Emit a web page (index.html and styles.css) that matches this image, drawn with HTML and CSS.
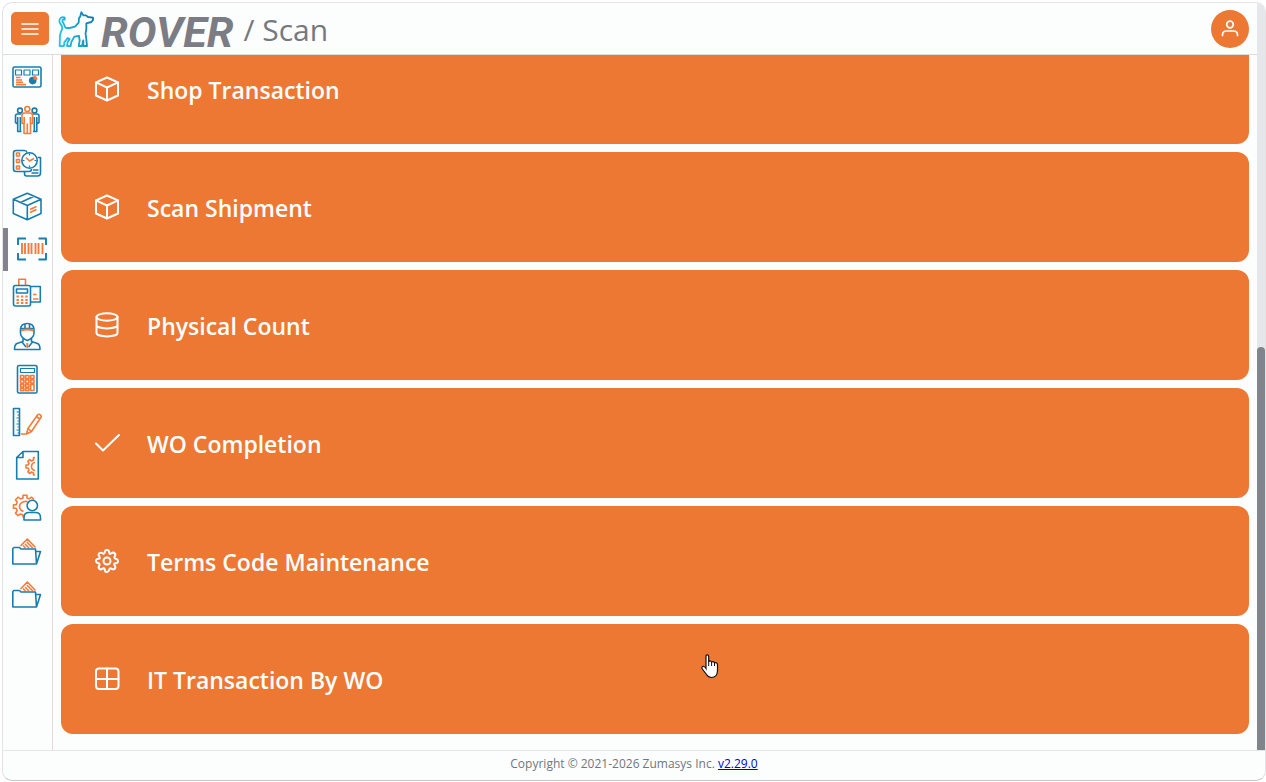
FILE: index.html
```html
<!DOCTYPE html>
<html lang="en">
<head>
<meta charset="utf-8">
<title>Rover / Scan</title>
<link rel="stylesheet" href="styles.css">
</head>
<body>
<div class="app">
  <div class="viewport">
    <div class="page">
      <header class="header">
        <button class="menu-button" type="button" aria-label="Menu">
          <svg width="18" height="14" viewBox="0 0 18 14"><path d="M1 2h16M1 7h16M1 12h16" stroke="#fff" stroke-width="1.6" stroke-linecap="round"/></svg>
        </button>
        <svg class="dog" viewBox="25 17 108 114" aria-hidden="true">
          <defs><linearGradient id="dog-stroke" x1="0" x2="1" y1="0.6" y2="0.3"><stop offset="0" stop-color="#27c4e6"/><stop offset="0.5" stop-color="#1a9fcb"/><stop offset="1" stop-color="#1678a8"/></linearGradient></defs>
          <path d="M45 40C37 36 29 41 29 50C29 60 37 62 38 69C38 78 31 84 31 94L30 125H43L44 114L54 101L60 104L54 113L52 125H63L65 113L74 97L88 95L90 109L87 125H97L101 108L101 125H112L109 96C104 88 111 80 110 71V57L125 53L130 47V40L115 38L109 33H101L95 24L92 36L88 41L87 55L76 67L60 71H49C43 68 46 61 40 55C36 49 39 44 45 46Z" fill="none" stroke="url(#dog-stroke)" stroke-width="5.5" stroke-linejoin="round"/>
        </svg>
        <span class="brand">ROVER</span>
        <h1 class="title">/ Scan</h1>
        <button class="avatar" type="button" aria-label="Account">
          <svg width="18" height="18" viewBox="0 0 18 18" fill="none" stroke="#fff" stroke-width="1.7" stroke-linecap="round"><circle cx="9" cy="4.500" r="3.300"/><path d="M1.500 15.500v-.7c0-2.500 2-3.800 4-3.800h7c2 0 4 1.300 4 3.800v.7"/></svg>
        </button>
      </header>
      <div class="body">
        <nav class="sidebar" aria-label="Modules">
          <a class="nav-item" href="#" aria-label="Dashboard"><svg class="nav-icon" viewBox="0 0 30 30"><rect class="b" x="1" y="5" width="28" height="20" rx="1.500"/><path class="b t" d="M3.500 8h6v5h-6zM12 8h6v5h-6zM20.500 8h6v5h-6z"/><path class="o" d="M4 15.500h4.500M4 18h6M4 20.300h7M4 22.600h10"/><circle class="bf" cx="20.700" cy="18.600" r="3.800"/><path class="of" d="M21.500 17.800V13.800a4 4 0 0 1 4 4z"/></svg></a>
          <a class="nav-item" href="#" aria-label="Human Resources"><svg class="nav-icon" viewBox="0 0 30 30"><circle class="b" cx="8" cy="5.500" r="2.400"/><circle class="b" cx="22.500" cy="5.500" r="2.400"/><path class="b" d="M9.500 9H5.500Q3.500 9 3.500 11V17.500L5.700 19V26.500H9.500M8.300 12V26M21 9h4Q27 9 27 11V17.500L24.800 19V26.500H21M22.300 12V26M5.700 12v7M24.800 12v7"/><circle class="o" cx="15.300" cy="4" r="2.500"/><path class="o" d="M12.300 8h6Q20.500 8 20.500 10.500V18.500H18.500V28.500H12V18.500H10V10.500Q10 8 12.300 8ZM12.200 12v7M18.400 12v7M15.300 18.500v10"/></svg></a>
          <a class="nav-item" href="#" aria-label="Time Tracking"><svg class="nav-icon" viewBox="0 0 30 30"><path class="b" d="M15 4.500Q14.500 2.500 12.500 2.500H4Q1.500 2.500 1.500 5V21Q1.500 23.500 4 23.500H17Q19.500 23.500 19.500 21M25.500 9.500H28.500V25Q28.500 28 25.500 28H14.500Q12.500 28 12.500 25.500V24M21 22h5.500M19.500 25h7"/><circle class="b" cx="17.500" cy="12.500" r="7.700"/><path class="b t" d="M17.500 5.500v2M17.500 17.500v2M10.500 12.500h2M22.500 12.500h2"/><path class="o" d="M4.500 5h3v3h-3zM4.500 11.500h3v3h-3zM4.500 18h3v3h-3zM14 9.500l3.500 3.500L22 10.500"/></svg></a>
          <a class="nav-item" href="#" aria-label="Inventory"><svg class="nav-icon" viewBox="0 0 30 30"><path class="b" d="M15.300 2.300L29 8.200V22.500L15.300 28.700L1.300 22.500V8.200ZM1.300 8.200L15.300 14.500L29 8.200M15.300 14.500V28.700M8.500 11.500L22 5.300"/><path class="o" d="M18 18.500L24.500 15.500M18 21.500L24.500 18.500"/></svg></a>
          <a class="nav-item active" href="#" aria-label="Scan" aria-current="page"><svg class="nav-icon" viewBox="0 0 30 30"><path class="b w" d="M1 11V4.500H9M21.500 4.500H29V11M29 19V25.500H21.500M9 25.500H1V19"/><path class="o w" d="M5 9v11M8 9v11M11.500 9v11M14.500 9v11M18.500 9v11M21.500 9v11M25.500 9v11"/></svg></a>
          <a class="nav-item" href="#" aria-label="Point of Sale"><svg class="nav-icon" viewBox="0 0 30 30"><path class="b" d="M18.500 9.500h9.800V25H18.500"/><path class="o" d="M6.800 8.500V2.200h6.700v6.300M21 17.500h3.500M21 22h5.500"/><path class="b" d="M3.500 8.500h13.300Q18.500 8.500 18.500 10.500V27Q18.500 29 16.800 29H3.500Q1.500 29 1.500 27V10.500Q1.500 8.500 3.500 8.500ZM4.500 12h11v4h-11z"/><path class="o w" stroke-dasharray="2.400 2" d="M4.500 19.500h11.500M4.500 23h11.500M4.500 26h11.500"/></svg></a>
          <a class="nav-item" href="#" aria-label="Work Orders"><svg class="nav-icon" viewBox="0 0 30 30"><path class="b" d="M8.500 9V8Q9 2.500 15.300 2.500Q21.500 2.500 22 8V12.500Q21.500 17 15.300 19.500Q9 17 8.500 12.500ZM8.500 7.500h13.500M13 2.500v4.500M17.500 2.500v4.500M11 17v3.500L5 22.500Q2.500 23.500 2.500 28.500H28Q28 23.500 25.500 22.500L19.500 20.500V17M10 21l4 5M20.500 21l-4 5"/><path class="o w" d="M9 9.500Q15 7.500 21.500 9.500M15.300 22v5"/></svg></a>
          <a class="nav-item" href="#" aria-label="Accounting"><svg class="nav-icon" viewBox="0 0 30 30"><rect class="b" x="5.500" y="1.500" width="19.500" height="27.500" rx="1.500"/><path class="b t" d="M8.500 4.500h14v4h-14z"/><path class="o" d="M8.500 11.500h3.300v3h-3.300zM13.600 11.500h3.300v3h-3.300zM18.700 11.500h3.300v3h-3.300zM8.500 16h3.300v3h-3.300zM13.600 16h3.300v3h-3.300zM18.700 16h3.300v3h-3.300zM8.500 20.500h3.300v2.500h-3.300zM13.600 20.500h3.300v2.500h-3.300zM18.700 20.500h3.300v6h-3.300zM8.500 24.500h3.300v2.300h-3.300zM13.600 24.500h3.300v2.300h-3.300z"/></svg></a>
          <a class="nav-item" href="#" aria-label="Engineering"><svg class="nav-icon" viewBox="0 0 30 30"><path class="b" d="M1.500 1.500h6v27h-6z"/><path class="b t" d="M4.500 5h3M5.500 8h2M4.500 11h3M5.500 14h2M4.500 17h3M5.500 20h2M4.500 23h3M5.500 26h2"/><path class="o" d="M9 27h5.500L16 21.500L25.500 8Q27 6.500 28.500 8T28.500 11L19.500 24.500L14.500 27M16 21.500L19.500 24.500M24.500 9.500L27.700 12"/></svg></a>
          <a class="nav-item" href="#" aria-label="Configuration"><svg class="nav-icon" viewBox="0 0 30 30"><path class="b" d="M11 1.500H26.300V29H4.700V7.500ZM11 1.500V7.500H4.700"/><path class="o" d="M23 7.500H21.500V10L19.500 11L17.500 9.500L15.800 11.500L17 13.300L16.200 15H14V18H16.200L17 20L15.800 21.700L17.500 23.500L19.500 22L21.500 23V25H23M23 12.500Q19.500 13 19.500 16.500T23 20.500"/></svg></a>
          <a class="nav-item" href="#" aria-label="User Settings"><svg class="nav-icon" viewBox="0 0 30 30"><path class="o" d="M11 24.500V22L8.500 21L6 22.700L3.500 20.200L5.200 17.700L4.200 15.200H1.500V11.700H4.200L5.200 9.200L3.500 6.700L6 4.200L8.500 5.900L11 4.900V2.200H15V4.900L17 5.900L19.500 4.200L22 6.500M11.500 18.500Q7.500 17 7.500 13.500T11.500 8.700Q14 8 15.500 8.800"/><circle class="b" cx="20.300" cy="12.500" r="5.200"/><path class="b" d="M12 27V24.500Q12 19.500 17 19.500H23.500Q28.500 19.500 28.500 24.500V27Z"/></svg></a>
          <a class="nav-item" href="#" aria-label="Documents"><svg class="nav-icon" viewBox="0 0 30 30"><path class="o" d="M8.500 10L15.300 3L23.500 11.500M13 8l4 4M14.800 6l6 6M11 9.500l2.500 2.500"/><path class="b" d="M.8 28V12.500L2 11.500H7.500L9 13H23.500L24.500 28ZM24 15.500H28.500L24.500 28"/></svg></a>
          <a class="nav-item" href="#" aria-label="Archive"><svg class="nav-icon" viewBox="0 0 30 30"><path class="o" d="M8.500 10L15.300 3L23.500 11.500M13 8l4 4M14.800 6l6 6M11 9.500l2.500 2.500"/><path class="b" d="M.8 28V12.500L2 11.500H7.500L9 13H23.500L24.500 28ZM24 15.500H28.500L24.500 28"/></svg></a>
        </nav>
        <main class="cards">
          <button class="card" type="button"><svg class="card-icon" viewBox="0 0 26 26"><path d="M13 1.500L24 6.300V19.500L13 24.500L2 19.500V6.300ZM2 6.300L13 11.500L24 6.300M13 11.500V24.500"/></svg>Shop Transaction</button>
          <button class="card" type="button"><svg class="card-icon" viewBox="0 0 26 26"><path d="M13 1.500L24 6.300V19.500L13 24.500L2 19.500V6.300ZM2 6.300L13 11.500L24 6.300M13 11.500V24.500"/></svg>Scan Shipment</button>
          <button class="card" type="button"><svg class="card-icon" viewBox="0 0 26 26"><ellipse cx="13" cy="5" rx="10.500" ry="3.700"/><path d="M2.500 5V21C2.500 25.500 23.500 25.500 23.500 21V5M2.500 13C2.500 17.500 23.500 17.500 23.500 13"/></svg>Physical Count</button>
          <button class="card" type="button"><svg class="card-icon" viewBox="0 0 26 26"><path d="M2 13.500L9 20.500L25 5"/></svg>WO Completion</button>
          <button class="card" type="button"><svg class="card-icon" viewBox="0 0 26 26"><circle cx="13" cy="13" r="3.500"/><path d="M10.700 4.500C11 2.500 11.300 2 13 2S15 2.500 15.300 4.500S16.500 6 17.500 5.300S19.500 4 20.700 5.300S21.400 7.500 20.700 8.500S20.500 10.400 21.500 10.700S24 11.200 24 13S23.500 15 21.500 15.300S20 16.500 20.700 17.500S22 19.500 20.700 20.700S18.500 21.400 17.500 20.700S15.600 20.500 15.300 21.500S14.800 24 13 24S11 23.500 10.700 21.500S9.500 20 8.500 20.700S6.500 22 5.300 20.700S4.600 18.500 5.300 17.500S5.500 15.600 4.500 15.300S2 14.800 2 13S2.500 11 4.500 10.700S6 9.500 5.300 8.500S4 6.500 5.300 5.300S7.500 4.600 8.500 5.300S10.400 5.500 10.700 4.500Z"/></svg>Terms Code Maintenance</button>
          <button class="card" type="button"><svg class="card-icon" viewBox="0 0 26 26"><rect x="2" y="2.500" width="22.500" height="20.500" rx="3"/><path d="M13 2.500V23M2 13H24.500"/></svg>IT Transaction By WO</button>
        </main>
      </div>
    </div>
    <div class="scrollbar"><div class="thumb"></div></div>
  </div>
  <footer class="footer">Copyright © 2021-2026 Zumasys Inc.&nbsp;<a href="#">v2.29.0</a></footer>
</div>
<svg class="cursor" width="18" height="25" viewBox="0 0 18 25" aria-hidden="true"><path d="M5 2.500Q5 .8 6.300 .8T7.700 2.500V7.500Q9.800 6.200 10.600 8Q12.500 7 13.500 8.700Q16.500 8.200 16.500 11V17Q16 23.500 10.500 23.500Q7.500 23.500 5.500 20.500L1.200 14.800Q.5 12.800 2 12.300Q3.500 12 5 14.500Z" fill="#fff" stroke="#111" stroke-width="1.200"/><path d="M7.700 7.500V12M10.600 8v4M13.500 8.700V12" stroke="#111"/></svg>
</body>
</html>
```
FILE: styles.css
```css
* {
  box-sizing: border-box;
}

body {
  margin: 0;
  height: 100vh;
  padding: 2px 0 1px 2px;
  background: #fff;
  color: #72767b;
  font-family: "Segoe UI", "Open Sans", "Noto Sans", sans-serif;
}

button {
  border: 0;
  padding: 0;
  font: inherit;
  cursor: pointer;
}

.app {
  display: flex;
  flex-direction: column;
  height: 100%;
  border: 1px solid #e3e3e5;
  border-bottom-color: #c4c5c7;
  border-radius: 10px;
  overflow: hidden;
  background: #fcfefe;
}

.viewport {
  display: flex;
  flex: 1;
  min-height: 0;
}

.page {
  display: flex;
  flex-direction: column;
  flex: 1;
  min-width: 0;
}

.header {
  display: flex;
  align-items: center;
  height: 52px;
  flex: none;
  padding: 0 8px;
  border-bottom: 1px solid #dfdcdf;
}

.menu-button {
  display: grid;
  place-items: center;
  width: 38px;
  height: 33px;
  border-radius: 5px;
  background: #ed7833;
}

.dog {
  width: 36px;
  height: 38px;
  margin: 0 7px 0 9px;
}

.brand {
  color: #7b7c84;
  font: italic 700 43px/50px Roboto, sans-serif;
  margin-top: 6px;
}

.title {
  margin: 3px 0 0 10px;
  color: #75797e;
  font-size: 30px;
  font-weight: 400;
  line-height: 40px;
}

.avatar {
  display: grid;
  place-items: center;
  width: 38px;
  height: 38px;
  margin-left: auto;
  border-radius: 50%;
  background: #ed7833;
}

.body {
  display: flex;
  flex: 1;
  min-height: 0;
}

.sidebar {
  display: flex;
  flex-direction: column;
  width: 50px;
  flex: none;
  padding-bottom: 134px;
  border-right: 1px solid #e4d9db;
}

.nav-item {
  display: flex;
  flex: 1;
  align-items: center;
  padding-left: 9px;
}

.nav-item.active {
  border-left: 5px solid #83828e;
}

.nav-icon {
  width: 30px;
  height: 30px;
  flex: none;
  fill: none;
  stroke-width: 1.6;
  stroke-linejoin: round;
}

.b { stroke: #1a7cae; }
.o { stroke: #f47b3c; }
.t { stroke-width: 1.2; }
.w { stroke-width: 1.9; }
.bf { fill: #1a7cae; }
.of { fill: #f47b3c; }

.cards {
  display: flex;
  flex: 1;
  flex-direction: column;
  justify-content: flex-end;
  gap: 8px;
  min-width: 0;
  padding: 0 8px 16px;
  overflow: hidden;
}

.card {
  display: flex;
  flex: none;
  align-items: center;
  gap: 27px;
  height: 110px;
  padding: 2px 33px 0;
  border-radius: 12px;
  background: #ed7833;
  color: #fff;
  font-size: 23px;
  font-weight: 600;
  text-align: left;
}

.card-icon {
  width: 26px;
  height: 26px;
  margin-bottom: 2px;
  fill: none;
  stroke: #fff;
  stroke-width: 2;
  stroke-linecap: round;
  stroke-linejoin: round;
}

.scrollbar {
  display: flex;
  flex-direction: column;
  justify-content: flex-end;
  width: 8px;
  flex: none;
  background: #e6e7ea;
}

.thumb {
  height: 54%;
  border-radius: 4px 4px 0 0;
  background: #80858c;
}

.footer {
  display: flex;
  flex: none;
  justify-content: center;
  height: 30px;
  padding-top: 4px;
  border-top: 1px solid #e6e6e8;
  font-size: 12px;
  line-height: 18px;
}

.footer a {
  color: #00c;
}

.cursor {
  position: absolute;
  left: 701px;
  top: 654px;
}
```
